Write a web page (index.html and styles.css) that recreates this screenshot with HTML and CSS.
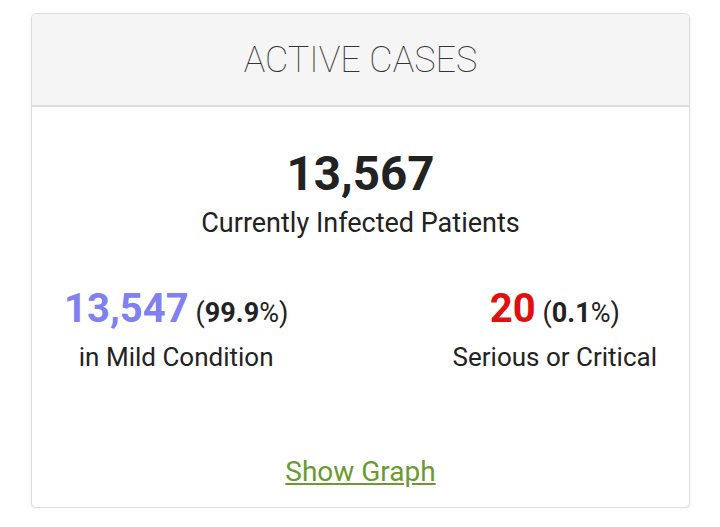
FILE: index.html
```html
<!DOCTYPE html>
<html>
<head>
<meta charset="utf-8">
<link rel="stylesheet" href="styles.css">
</head>
<body>
<div class="card">
  <div class="card-header">ACTIVE CASES</div>
  <div class="card-body">
    <div class="total">13,567</div>
    <div class="total-label">Currently Infected Patients</div>
    <div class="split">
      <div class="col">
        <div class="num"><span class="mild">13,547</span> <span class="pct">(<strong>99.9</strong>%)</span></div>
        <div class="label">in Mild Condition</div>
      </div>
      <div class="col">
        <div class="num"><span class="serious">20</span> <span class="pct">(<strong>0.1</strong>%)</span></div>
        <div class="label">Serious or Critical</div>
      </div>
    </div>
    <a class="graph" href="#">Show Graph</a>
  </div>
</div>
</body>
</html>
```
FILE: styles.css
```css
html, body {
  margin: 0;
  background: #fff;
}
body {
  padding: 13px 30px 0 31px;
  font-family: Roboto, "Liberation Sans", sans-serif;
  color: #222;
}
.card {
  border: 1px solid #ddd;
  border-radius: 5px;
  box-shadow: 0 1px 2px rgba(0,0,0,0.12);
  height: 495px;
  box-sizing: border-box;
  display: flex;
  flex-direction: column;
  overflow: hidden;
}
.card-header {
  background: #f5f5f5;
  border-bottom: 2px solid #ddd;
  height: 93px;
  box-sizing: border-box;
  display: flex;
  align-items: center;
  justify-content: center;
  font-size: 36px;
  font-weight: 100;
  color: #333;
  padding-top: 1px;
}
.card-body {
  flex: 1;
  display: flex;
  flex-direction: column;
  align-items: center;
}
.total {
  margin-top: 39px;
  font-size: 47.5px;
  font-weight: 700;
  line-height: 56px;
  color: #222;
}
.total-label {
  font-size: 27px;
  line-height: 30px;
  margin-top: 6px;
  color: #222;
}
.split {
  align-self: stretch;
  display: flex;
  justify-content: space-between;
  padding: 0 32px;
  margin-top: 49px;
}
.col {
  text-align: center;
}
.num {
  line-height: 44px;
}
.mild, .serious {
  font-size: 40px;
  font-weight: 700;
}
.mild { color: #8080f0; }
.serious { color: #e01010; }
.pct {
  font-size: 27px;
  color: #222;
  margin-left: 3px;
}
.pct strong { font-weight: 700; }
.label {
  font-size: 26px;
  line-height: 30px;
  margin-top: 3px;
}
.graph {
  margin-top: 83px;
  font-size: 28px;
  color: #6b9a31;
  text-decoration: underline;
  text-underline-offset: 2px;
}
```
